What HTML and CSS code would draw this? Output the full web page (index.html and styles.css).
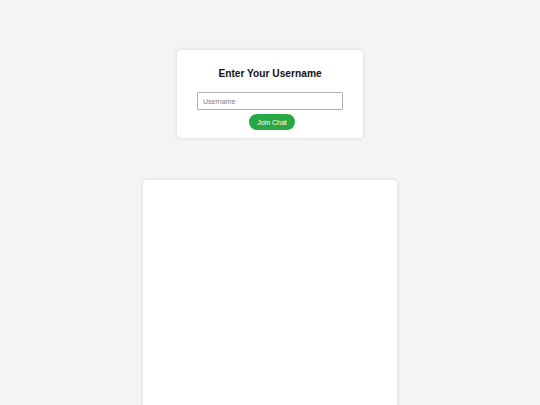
FILE: index.html
```html
<!DOCTYPE html>
<html lang="en">
<head>
  <meta charset="UTF-8">
  <title>Chat</title>
  <link rel="stylesheet" href="styles.css">
</head>
<body>

  <div class="login-box">
    <h2>Enter Your Username</h2>
    <input type="text" id="username" placeholder="Username">
    <button id="joinBtn">Join Chat</button>
  </div>

  <div class="chat-box" id="chat"></div>

</body>
</html>
```

FILE: styles.css
```css
body {
  font-family: Arial, "Liberation Sans", sans-serif;
  background-color: #f4f4f4;
  margin: 0;
  padding-top: 50px;
  display: flex;
  flex-direction: column;
  align-items: center;
}
.login-box {
  width: 186px;
  box-sizing: border-box;
  background-color: #fff;
  border-radius: 4px;
  box-shadow: 0 0 4px rgba(0, 0, 0, 0.12);
  padding: 17px 20px 8px;
  display: flex;
  flex-direction: column;
  align-items: center;
}
.login-box h2 {
  font-size: 10.2px;
  line-height: 14px;
  margin: 0 0 11px;
  color: #111;
}
.login-box input {
  width: 146px;
  height: 18px;
  box-sizing: border-box;
  border: 1px solid #b0b0b0;
  border-radius: 1px;
  padding: 0 5px;
  font-family: inherit;
  font-size: 7px;
  margin: 0 0 4px;
}
.login-box input::placeholder {
  color: #808080;
}
.login-box button {
  width: 46px;
  height: 16px;
  margin-left: 4px;
  background-color: #28a745;
  color: white;
  border: none;
  border-radius: 8px;
  font-family: inherit;
  font-size: 7px;
  padding: 0;
  cursor: pointer;
}
.chat-box {
  margin-top: 42px;
  width: 254px;
  height: 300px;
  background-color: #fff;
  border-radius: 4px;
  box-shadow: 0 0 4px rgba(0, 0, 0, 0.12);
}
```
